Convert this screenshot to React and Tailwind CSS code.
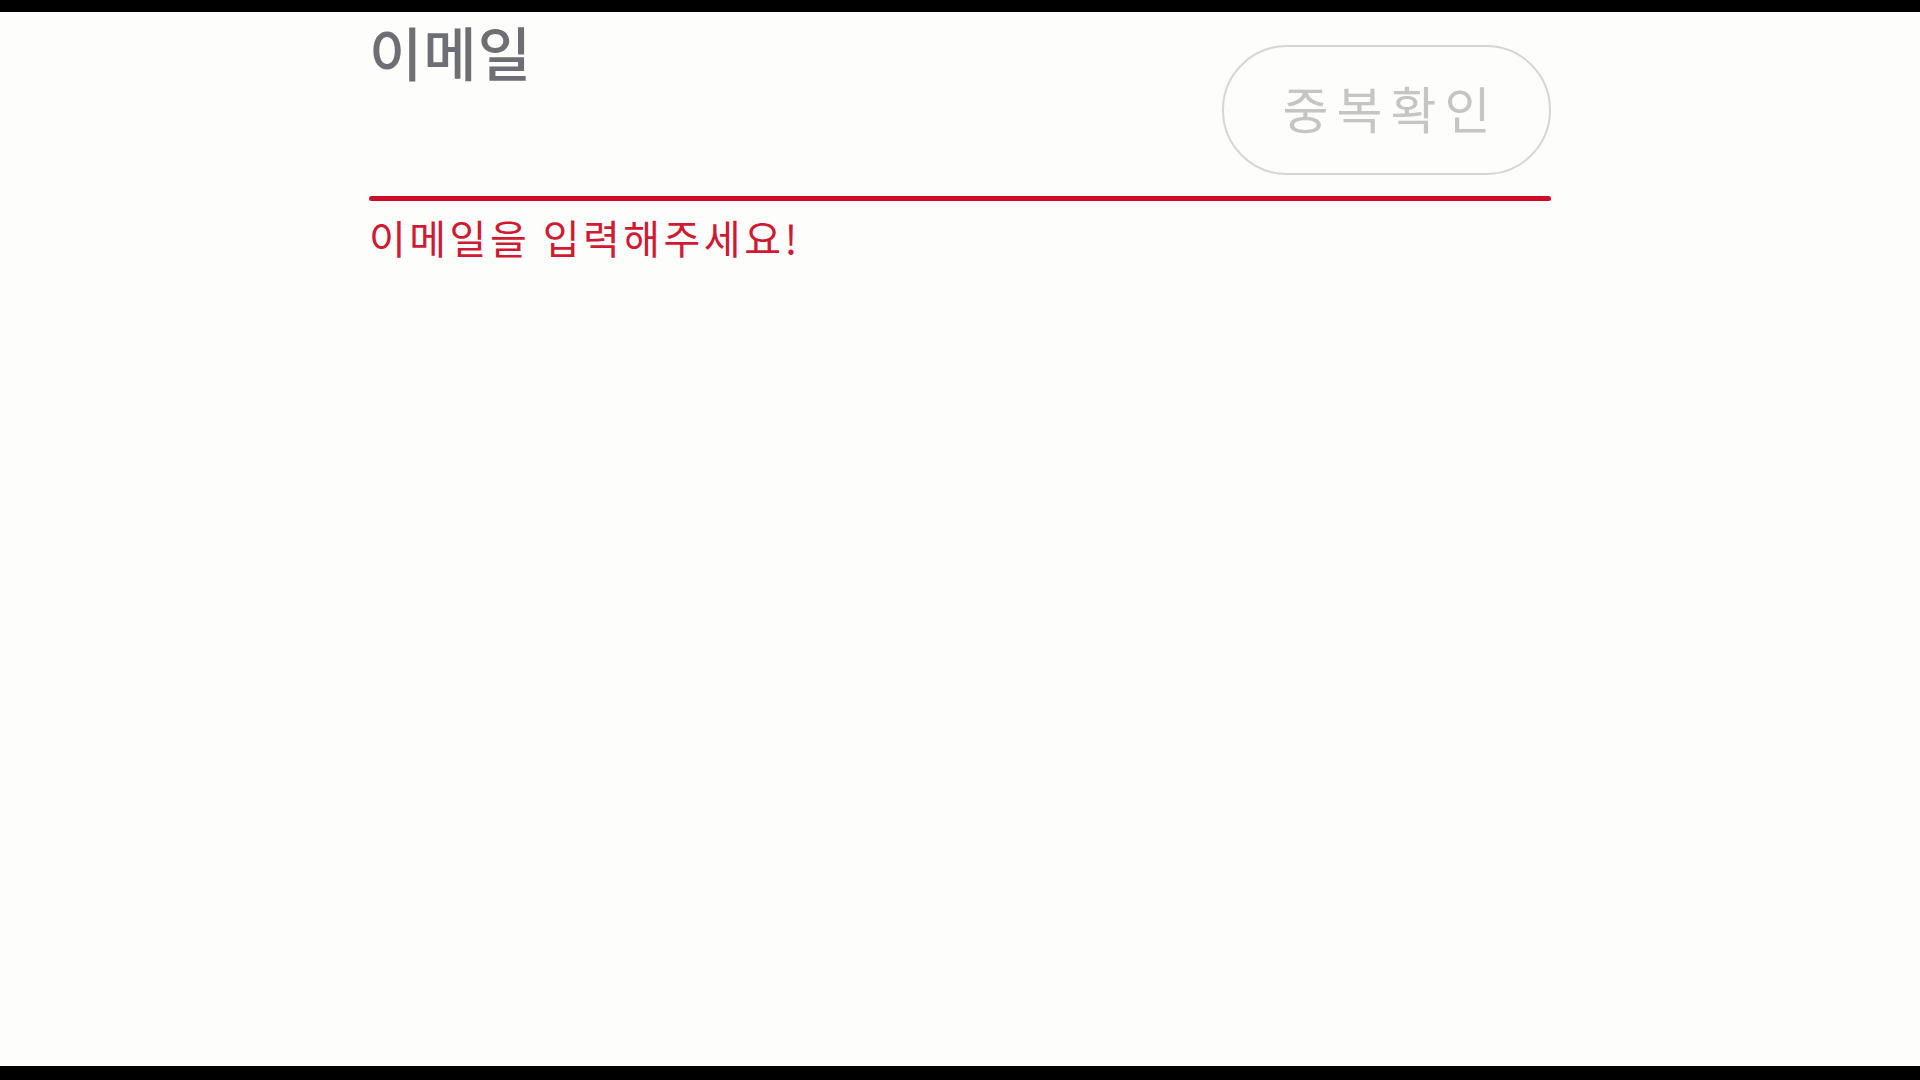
import React from 'react';

function App() {
  return (
    <div className="h-screen bg-black flex flex-col font-['Noto_Sans_CJK_KR',sans-serif]">
      <div className="h-[12px] shrink-0" />
      <div className="flex-1 bg-[#fdfdfb]">
        <div className="mx-auto w-[1182px]">
          {/* 라벨 + 중복확인 */}
          <div className="flex justify-between items-start">
            <h1 className="mt-[5px] text-[58px] leading-[1.2] font-medium text-[#6e6f74] tracking-[1px]">이메일</h1>
            <button className="mt-[33px] w-[329px] h-[130px] pb-[6px] pl-[8px] rounded-full border-2 border-[#d6d6d6] text-[50px] text-[#c5c5c5] tracking-[8px]">
              중복확인
            </button>
          </div>
          <div className="mt-[21px] h-[5px] bg-[#cc0d2a] rounded-full" />
          <p className="mt-[12px] text-[40px] leading-[1.2] text-[#d01a33] tracking-[3.5px]">이메일을 입력해주세요!</p>
        </div>
      </div>
      <div className="h-[14px] shrink-0" />
    </div>
  );
}

export default App;
